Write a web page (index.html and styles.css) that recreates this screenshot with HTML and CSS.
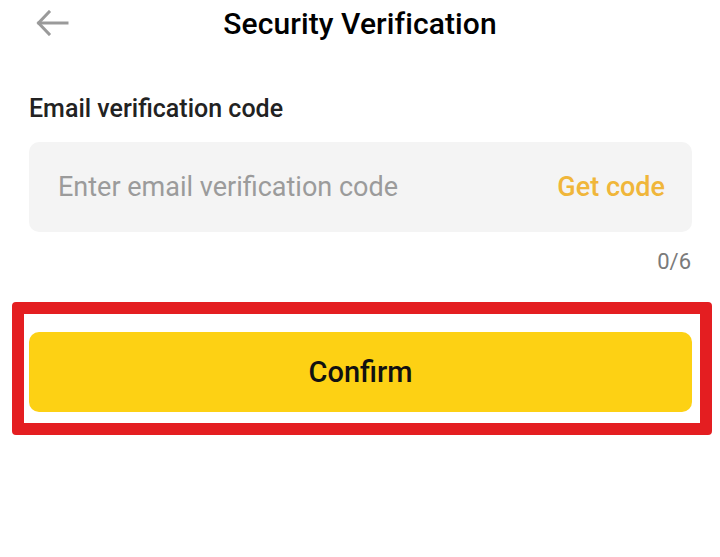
FILE: index.html
```html
<!DOCTYPE html>
<html lang="en">
<head>
    <meta charset="UTF-8">
    <title>Security Verification</title>
    <link rel="stylesheet" href="styles.css">
</head>
<body>
    <div class="page">
        <div class="topbar">
            <a class="back" href="#">
                <svg width="34" height="26" viewBox="0 0 34 26" fill="none" stroke="#9a9a9a" stroke-width="3" stroke-linecap="square">
                    <path d="M3 13H31"/>
                    <path d="M13 2L2.5 13L13 24"/>
                </svg>
            </a>
            <h1>Security Verification</h1>
            <span></span>
        </div>

        <div class="form">
            <label for="code">Email verification code</label>
            <div class="field">
                <input type="text" id="code" maxlength="6" placeholder="Enter email verification code">
                <button class="get-code">Get code</button>
            </div>
            <div class="counter">0/6</div>

            <div class="highlight">
                <button class="confirm">Confirm</button>
            </div>
        </div>
    </div>
</body>
</html>
```

FILE: styles.css
```css
body { margin: 0; font-family: Roboto, "Noto Sans", sans-serif; background: #fff; color: #111; }
.page { width: 720px; }
.topbar { display: grid; grid-template-columns: 1fr auto 1fr; align-items: center; height: 46px; }
.back { display: flex; padding-left: 36px; }
h1 { margin: 0; font-size: 30px; font-weight: 500; color: #000; letter-spacing: 0.1px; }
.form { padding: 49px 28px 0 29px; }
label { display: block; font-size: 25px; font-weight: 500; color: #222; line-height: 28px; }
.field { display: flex; align-items: center; height: 90px; margin-top: 19px; background: #f4f4f4; border-radius: 10px; padding: 0 27px 0 29px; }
.field input { flex: 1; min-width: 0; border: none; background: transparent; outline: none; font-family: inherit; font-size: 27px; color: #333; padding: 0; }
.field input::placeholder { color: #9b9b9b; }
.get-code { border: none; background: none; padding: 0; font-family: inherit; font-size: 27px; font-weight: 500; color: #f0b63a; cursor: pointer; }
.counter { text-align: right; font-size: 22px; color: #7a7a7a; margin-top: 17px; padding-right: 1px; line-height: 26px; }
.highlight { margin: 27px -20px 0 -17px; border: 12px solid #e41e21; border-radius: 4px; padding: 18px 8px 11px 5px; }
.confirm { display: block; width: 100%; height: 80px; border: none; border-radius: 10px; background: #fdd114; font-family: inherit; font-size: 29px; font-weight: 500; color: #111; cursor: pointer; }
```
